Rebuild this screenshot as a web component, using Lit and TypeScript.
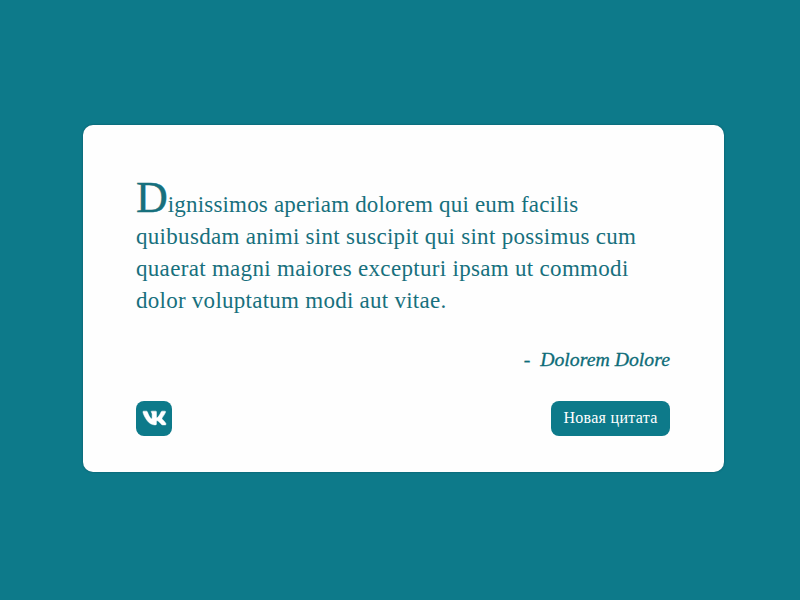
import { LitElement, html, css } from "lit";
import { customElement } from "lit/decorators.js";

@customElement("app-root")
export class AppRoot extends LitElement {
  static styles = css`
    :host {
      display: flex;
      box-sizing: border-box;
      width: 100%;
      height: 100vh;
      padding: 124.5px 76.5px 0 82.5px;
      overflow: hidden;
      background: #0d7a8a;
      color: #17707d;
      font-family: Georgia, "Liberation Serif", serif;
    }
    .card {
      display: flex;
      flex-direction: column;
      box-sizing: border-box;
      width: 641px;
      height: 347.5px;
      padding: 64px 53.5px 36px;
      border-radius: 10px;
      background: #fefefe;
      box-shadow: 0 0 2px rgba(0, 40, 55, 0.5);
    }
    .quote {
      margin: 0;
      font-size: 23px;
      line-height: 32px;
      white-space: nowrap;
    }
    .line { display: block; height: 32px; }
    .l1 { letter-spacing: 0.18px; }
    .l2 { letter-spacing: 0.3px; }
    .l3 { letter-spacing: 0.31px; }
    .l4 { letter-spacing: 0.26px; }
    .cap {
      font-size: 44px;
      line-height: 0;
      letter-spacing: 0;
      -webkit-text-stroke: 0.4px currentColor;
    }
    .author {
      margin-top: 26px;
      height: 32px;
      line-height: 32px;
      font-size: 19.8px;
      font-style: italic;
      -webkit-text-stroke: 0.3px currentColor;
      text-align: right;
      white-space: pre;
      color: #0d6c78;
    }
    .actions {
      display: flex;
      justify-content: space-between;
      margin-top: auto;
    }
    .share, .next {
      display: flex;
      align-items: center;
      justify-content: center;
      box-sizing: border-box;
      height: 35px;
      padding: 0 0 1px;
      border: 0;
      border-radius: 8px;
      background: #0d7a8a;
      color: #fff;
    }
    .share { width: 36px; }
    .share svg {
      display: block;
      width: 25px;
      height: 22px;
      fill: currentColor;
      stroke: currentColor;
      stroke-width: 12;
    }
    .next {
      width: 119px;
      font: 16px/34px Georgia, "Liberation Serif", serif;
      letter-spacing: 0.3px;
    }
  `;

  render() {
    return html`
      <main class="card">
        <p class="quote">
          <span class="line l1"><span class="cap">D</span>ignissimos aperiam dolorem qui eum facilis</span>
          <span class="line l2">quibusdam animi sint suscipit qui sint possimus cum</span>
          <span class="line l3">quaerat magni maiores excepturi ipsam ut commodi</span>
          <span class="line l4">dolor voluptatum modi aut vitae.</span>
        </p>
        <div class="author">-  Dolorem Dolore</div>
        <div class="actions">
          <button class="share" aria-label="VK">
            <svg viewBox="0 0 576 512"><path d="M545 117.7c3.7-12.5 0-21.7-17.8-21.7h-58.9c-15 0-21.9 7.9-25.6 16.7 0 0-30 73.1-72.4 120.5-13.7 13.7-20 18.1-27.5 18.1-3.7 0-9.4-4.4-9.4-16.9V117.7c0-15-4.2-21.7-16.6-21.7h-92.6c-9.4 0-15 7-15 13.5 0 14.2 21.2 17.5 23.4 57.5v86.8c0 19-3.4 22.5-10.9 22.5-20 0-68.6-73.4-97.4-157.4-5.8-16.3-11.5-22.9-26.6-22.9H38.8c-16.8 0-20.2 7.9-20.2 16.7 0 15.6 20 93.1 93.1 195.5C160.4 378.1 229 416 291.4 416c37.5 0 42.1-8.4 42.1-22.9 0-66.8-3.4-73.1 15.4-73.1 8.7 0 23.7 4.4 58.7 38.1 40 40 46.6 57.9 69 57.9h58.9c16.8 0 25.3-8.4 20.4-25-11.2-34.9-86.9-106.7-90.3-111.5-8.7-11.2-6.2-16.2 0-26.2.1-.1 72-101.3 79.4-135.6z"/></svg>
          </button>
          <button class="next">Новая цитата</button>
        </div>
      </main>
    `;
  }
}
